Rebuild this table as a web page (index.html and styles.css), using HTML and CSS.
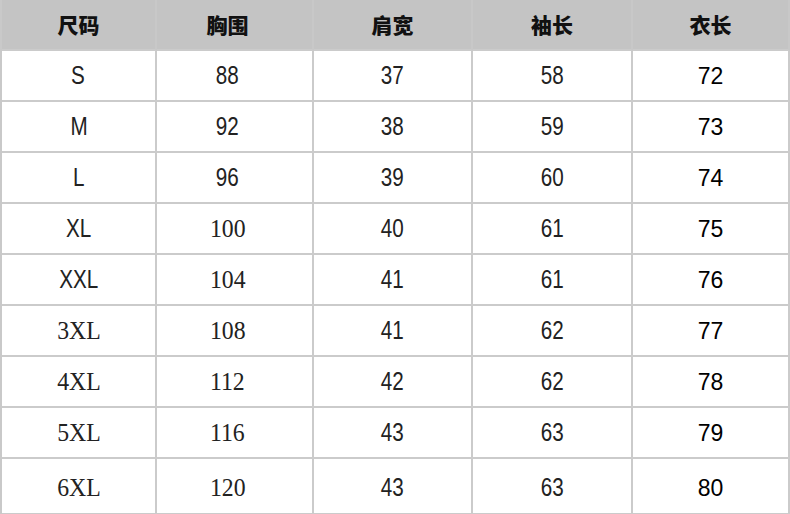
FILE: index.html
```html
<!DOCTYPE html>
<html lang="zh">
<head>
<meta charset="utf-8">
<title>尺码表</title>
<link rel="stylesheet" href="styles.css">
</head>
<body>
<table class="chart">
  <colgroup>
    <col class="c1"><col class="c2"><col class="c3"><col class="c4"><col class="c5">
  </colgroup>
  <thead>
    <tr><th>尺码</th><th class="off">胸围</th><th>肩宽</th><th>袖长</th><th>衣长</th></tr>
  </thead>
  <tbody>
    <tr><td><span class="nar">S</span></td><td class="off"><span class="nar">88</span></td><td><span class="nar">37</span></td><td><span class="nar">58</span></td><td><span class="ari">72</span></td></tr>
    <tr><td><span class="nar">M</span></td><td class="off"><span class="nar">92</span></td><td><span class="nar">38</span></td><td><span class="nar">59</span></td><td><span class="ari">73</span></td></tr>
    <tr><td><span class="nar">L</span></td><td class="off"><span class="nar">96</span></td><td><span class="nar">39</span></td><td><span class="nar">60</span></td><td><span class="ari">74</span></td></tr>
    <tr><td><span class="nar">XL</span></td><td class="off"><span class="ser">100</span></td><td><span class="nar">40</span></td><td><span class="nar">61</span></td><td><span class="ari">75</span></td></tr>
    <tr><td><span class="nar">XXL</span></td><td class="off"><span class="ser">104</span></td><td><span class="nar">41</span></td><td><span class="nar">61</span></td><td><span class="ari">76</span></td></tr>
    <tr><td><span class="ser">3XL</span></td><td class="off"><span class="ser">108</span></td><td><span class="nar">41</span></td><td><span class="nar">62</span></td><td><span class="ari">77</span></td></tr>
    <tr><td><span class="ser">4XL</span></td><td class="off"><span class="ser">112</span></td><td><span class="nar">42</span></td><td><span class="nar">62</span></td><td><span class="ari">78</span></td></tr>
    <tr><td><span class="ser">5XL</span></td><td class="off"><span class="ser">116</span></td><td><span class="nar">43</span></td><td><span class="nar">63</span></td><td><span class="ari">79</span></td></tr>
    <tr class="last"><td><span class="ser">6XL</span></td><td class="off"><span class="ser">120</span></td><td><span class="nar">43</span></td><td><span class="nar">63</span></td><td><span class="ari">80</span></td></tr>
  </tbody>
</table>
</body>
</html>
```
FILE: styles.css
```css
html, body {
  margin: 0;
  padding: 0;
  background: #ffffff;
}
body {
  width: 790px;
  height: 514px;
  overflow: hidden;
  font-family: "Liberation Sans", "Noto Sans CJK SC", sans-serif;
  color: #1a1a1a;
}
.chart {
  border-collapse: separate;
  border-spacing: 0;
  table-layout: fixed;
  width: 790px;
  border-left: 2px solid #c9c9c9;
  box-sizing: border-box;
}
.c1 { width: 155px; }
.c2 { width: 157px; }
.c3 { width: 159px; }
.c4 { width: 160px; }
.c5 { width: 157px; }
.chart th,
.chart td {
  padding: 0;
  text-align: center;
  vertical-align: middle;
  border-right: 2px solid #cbcbcb;
  border-bottom: 2px solid #cbcbcb;
}
.chart thead th {
  height: 48px;
  background: #c4c4c4;
  border-right-color: #c8c8c8;
  font-family: "Noto Sans CJK SC", sans-serif;
  font-weight: 900;
  font-size: 21px;
  color: #111111;
  padding-bottom: 1px;
}
.chart td {
  height: 49px;
  font-size: 24px;
}
.chart tr.last td {
  height: 51px;
  padding-top: 3px;
}
.chart td.off,
.chart th.off {
  padding-right: 14px;
}
.nar {
  display: inline-block;
  font-family: "Liberation Sans", sans-serif;
  font-size: 24px;
  transform: scaleX(0.86) scaleY(1.05);
  color: #222222;
}
.ser {
  display: inline-block;
  font-family: "Liberation Serif", serif;
  font-size: 25px;
  transform: scaleX(0.95);
  color: #222222;
}
.ari {
  display: inline-block;
  font-family: "Liberation Sans", sans-serif;
  font-size: 23px;
  color: #000000;
}
```
